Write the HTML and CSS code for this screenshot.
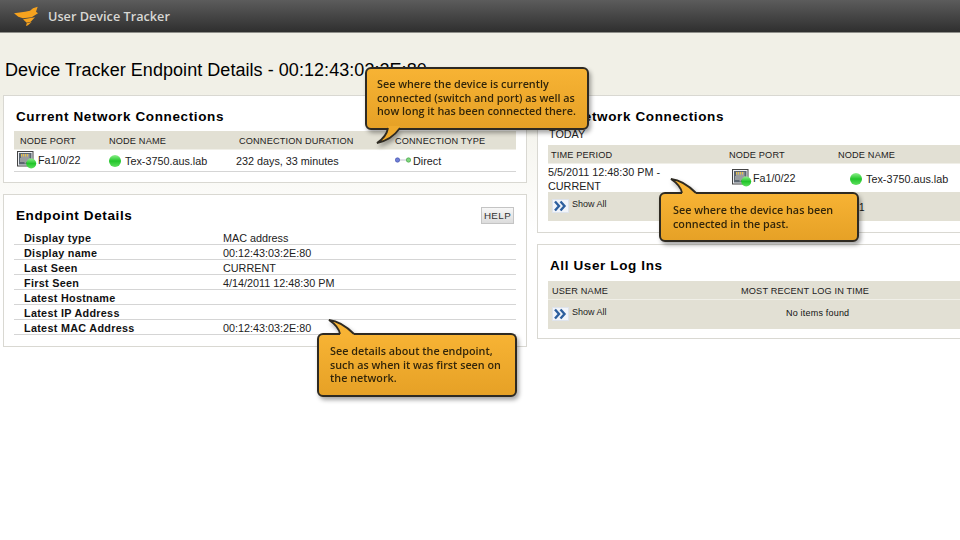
FILE: index.html
```html
<!DOCTYPE html>
<html lang="en">
<head>
<meta charset="utf-8">
<title>User Device Tracker</title>
<link rel="stylesheet" href="styles.css">
</head>
<body>
<svg class="defs" width="0" height="0" aria-hidden="true">
  <defs>
    <linearGradient id="led" x1="0" y1="0" x2="0" y2="1"><stop offset="0" stop-color="#8df08a"/><stop offset=".5" stop-color="#22c52a"/><stop offset="1" stop-color="#5fe05f"/></linearGradient>
    <symbol id="port" viewBox="0 0 20 20">
      <rect x=".5" y=".5" width="15.500" height="14.500" fill="#eef0f4" stroke="#444"/>
      <rect x="2" y="2" width="12.500" height="11.500" fill="#5c6670"/>
      <path d="M4 3h8.500v4h1v4H9v1.500H7.500V11H3V7h1z" fill="#9a9d9f"/>
      <path d="M4.500 3v2.500M6.500 3v2.500M8.500 3v2.500M10.500 3v2.500" stroke="#e8c04a"/>
      <circle cx="14.200" cy="12.500" r="5" fill="url(#led)"/>
    </symbol>
    <symbol id="showall" viewBox="0 0 17 14">
      <rect x=".5" y=".5" width="16" height="13" fill="#f2f5fa" stroke="#dfe4ec"/>
      <path d="M3 2.500 7 7 3 11.500M8.500 2.500l4 4.500-4 4.500" fill="none" stroke="#2d5f9e" stroke-width="2.400"/>
    </symbol>
  </defs>
</svg>

<header class="topbar">
  <svg class="logo" width="25" height="20" viewBox="14 6 25 20" aria-hidden="true">
    <path d="M14 13.300 25 11.700 30 10.700 33 8.300 37.700 6.700 36 11.700 38 13.300 31.700 17.300 23 18.300 18.300 16.700z" fill="#f6a21e"/>
    <path d="M23 19.300 35 17.300 30.700 21.700 26.700 22.700z" fill="#f6a21e"/>
    <path d="M26.700 23.300 31.700 22 28 25.300 26 26z" fill="#f6a21e"/>
  </svg>
  <span class="brand">User Device Tracker</span>
</header>

<main class="page">
  <h1 class="page-title">Device Tracker Endpoint Details - 00:12:43:03:2E:80</h1>
  <div class="columns">
    <div class="col col-left">
      <section class="panel panel-current">
        <h2 class="panel-title">Current Network Connections</h2>
        <div class="row head cur"><span>NODE PORT</span><span>NODE NAME</span><span>CONNECTION DURATION</span><span>CONNECTION TYPE</span></div>
        <div class="row body cur">
          <span class="cell cell-port"><svg class="ico-port"><use href="#port"/></svg>Fa1/0/22</span>
          <span class="cell"><svg class="ico-led" viewBox="0 0 12 12"><circle cx="6" cy="6" r="6" fill="url(#led)"/></svg>Tex-3750.aus.lab</span>
          <span class="cell">232 days, 33 minutes</span>
          <span class="cell"><svg class="ico-conn" viewBox="0 0 16 6"><path d="M3 3h10" stroke="#aab" stroke-width=".7"/><circle cx="2.500" cy="3" r="2.200" fill="#6f7fd6" stroke="#3a4aa8" stroke-width=".6"/><circle cx="13.500" cy="3" r="2.200" fill="#7ed67e" stroke="#3a9a3a" stroke-width=".6"/></svg>Direct</span>
        </div>
      </section>

      <section class="panel panel-details">
        <div class="panel-head">
          <h2 class="panel-title">Endpoint Details</h2>
          <button class="help">HELP</button>
        </div>
        <dl class="details">
          <div class="detail"><dt>Display type</dt><dd>MAC address</dd></div>
          <div class="detail"><dt>Display name</dt><dd>00:12:43:03:2E:80</dd></div>
          <div class="detail"><dt>Last Seen</dt><dd>CURRENT</dd></div>
          <div class="detail"><dt>First Seen</dt><dd>4/14/2011 12:48:30 PM</dd></div>
          <div class="detail"><dt>Latest Hostname</dt><dd></dd></div>
          <div class="detail"><dt>Latest IP Address</dt><dd></dd></div>
          <div class="detail"><dt>Latest MAC Address</dt><dd>00:12:43:03:2E:80</dd></div>
        </dl>
      </section>
    </div>

    <div class="col col-right">
      <section class="panel panel-all">
        <h2 class="panel-title">All Network Connections</h2>
        <div class="today">TODAY</div>
        <div class="row head all"><span>TIME PERIOD</span><span>NODE PORT</span><span>NODE NAME</span></div>
        <div class="row body all">
          <span class="cell period">5/5/2011 12:48:30 PM - CURRENT</span>
          <span class="cell cell-port"><svg class="ico-port"><use href="#port"/></svg>Fa1/0/22</span>
          <span class="cell name-indent"><svg class="ico-led" viewBox="0 0 12 12"><circle cx="6" cy="6" r="6" fill="url(#led)"/></svg>Tex-3750.aus.lab</span>
        </div>
        <div class="footer-row">
          <a class="show-all"><svg class="ico-show"><use href="#showall"/></svg><span class="show-label">Show All</span></a>
          <span class="pager">1</span>
        </div>
      </section>

      <section class="panel panel-logins">
        <h2 class="panel-title">All User Log Ins</h2>
        <div class="row head log"><span>USER NAME</span><span>MOST RECENT LOG IN TIME</span></div>
        <div class="footer-row footer-log">
          <a class="show-all"><svg class="ico-show"><use href="#showall"/></svg><span class="show-label">Show All</span></a>
          <span class="none">No items found</span>
        </div>
      </section>
    </div>
  </div>
</main>

<aside class="callout c1">
  <svg class="tail tail-down" width="28" height="16" viewBox="0 0 28 16"><path class="tail-fill" d="M13 -2V0C12 6 8 11 2 15 12 13 20 7 25 0V-2z"/><path class="tail-line" d="M13 0C12 6 8 11 2 15 12 13 20 7 25 0"/></svg>
  See where the device is currently connected (switch and port) as well as how long it has been connected there.
</aside>
<aside class="callout c2">
  <svg class="tail tail-up" width="28" height="15" viewBox="0 0 28 15"><path class="tail-fill" d="M1 0C10 1 18 6 26 14V16H12V14C11 8 7 4 1 0z"/><path class="tail-line" d="M12 14C11 8 7 4 1 0 10 1 18 6 26 14"/></svg>
  See where the device has been connected in the past.
</aside>
<aside class="callout c3">
  <svg class="tail tail-up" width="28" height="15" viewBox="0 0 28 15"><path class="tail-fill" d="M1 0C10 1 18 6 26 14V16H12V14C11 8 7 4 1 0z"/><path class="tail-line" d="M12 14C11 8 7 4 1 0 10 1 18 6 26 14"/></svg>
  See details about the endpoint, such as when it was first seen on the network.
</aside>
</body>
</html>
```
FILE: styles.css
```css
* { box-sizing: border-box; }
html, body { margin: 0; height: 100%; }
body {
  position: relative;
  width: 960px;
  height: 540px;
  overflow: hidden;
  background: #fff;
  font-family: "Liberation Sans", Arial, sans-serif;
  color: #111;
}
.defs { position: absolute; }

.topbar {
  height: 33px;
  display: flex;
  align-items: center;
  padding-left: 14px;
  background: linear-gradient(#5c5c5c, #2f2f2f);
  border-bottom: 1px solid #8f8f8a;
}
.logo { margin-right: 9px; }
.brand {
  font: 600 12.700px "Open Sans", sans-serif;
  color: #d8d8d4;
}

.page {
  background: linear-gradient(#f1f0e7 0, #f1f0e7 60px, #fff 200px);
  height: 507px;
  padding: 27px 0 0 3px;
}
.page-title {
  margin: 0 0 14px 2px;
  font-size: 18px;
  line-height: 21px;
  font-weight: 400;
  letter-spacing: .05px;
  color: #000;
  white-space: nowrap;
}
.columns { display: flex; gap: 10px; }
.col { flex: none; display: flex; flex-direction: column; gap: 11px; }
.col-left { width: 524px; }
.col-right { width: 440px; }

.panel {
  background: #fff;
  border: 1px solid #d9d8d2;
  padding: 0 10px;
}
.panel-current { height: 88px; }
.panel-details { height: 153px; }
.panel-all { height: 138px; }
.panel-logins { height: 95px; }
.panel-title {
  margin: 0;
  padding: 12px 0 0 2px;
  height: 35px;
  font-size: 13.500px;
  line-height: 17px;
  font-weight: 700;
  letter-spacing: .62px;
  color: #000;
}
.panel-head { display: flex; justify-content: space-between; align-items: flex-start; height: 35px; }
.help {
  margin-top: 12px;
  margin-right: 2px;
  width: 33px;
  height: 17px;
  padding: 0;
  border: 1px solid #c4c4c4;
  background: linear-gradient(#f7f7f7, #dcdcdc);
  font: 9.800px "Liberation Sans", sans-serif;
  letter-spacing: .4px;
  color: #333;
}

.row { display: flex; align-items: center; }
.head {
  height: 19px;
  padding-top: 1px;
  background: #e2e0d4;
  border-bottom: 1px solid #f0efe8;
  font-size: 9.200px;
  letter-spacing: .15px;
  color: #222;
}
.body {
  font-size: 10.800px;
  color: #222;
  border-bottom: 1px solid #d5d5d5;
}
.row > span { flex: none; display: flex; align-items: center; }
.cur.head { padding-left: 6px; }
.cur.head > span:nth-child(1) { width: 89px; }
.cur.head > span:nth-child(2) { width: 130px; }
.cur.head > span:nth-child(3) { width: 156px; }
.cur.body { height: 22px; padding-left: 3px; }
.cur.body > span:nth-child(1) { width: 92px; }
.cur.body > span:nth-child(2) { width: 127px; }
.cur.body > span:nth-child(3) { width: 159px; }

.cell-port { margin-bottom: 2px; }
.ico-port { width: 20px; height: 20px; margin: 2px 1px 0 0; flex: none; }
.ico-led { width: 12px; height: 12px; margin-right: 4px; flex: none; }
.ico-conn { width: 16px; height: 6px; margin: 0 2px 2px 0; flex: none; }

.details { margin: 0; }
.detail {
  display: flex;
  height: 15px;
  padding: 2px 0 0 10px;
  border-bottom: 1px solid #d5d5d5;
  font-size: 10.800px;
  line-height: 12px;
}
.detail dt { width: 199px; font-weight: 700; letter-spacing: .3px; color: #111; }
.detail dd { margin: 0; color: #222; }

.panel-all { padding-right: 0; }
.panel-logins { padding-right: 0; }
.panel-all .panel-title { height: 30px; padding-left: 2px; }
.today { font-size: 10.800px; height: 19px; line-height: 13px; padding: 2px 0 0 1px; color: #222; }
.all.head { padding-left: 3px; }
.all.head > span:nth-child(1) { width: 178px; }
.all.head > span:nth-child(2) { width: 109px; }
.all.body { height: 28px; padding-top: 2px; border-bottom: 0; }
.row > .period { display: block; width: 130px; margin-right: 54px; line-height: 14px; }
.all.body > span:nth-child(2) { width: 118px; }
.footer-row {
  position: relative;
  display: flex;
  align-items: flex-start;
  height: 29px;
  background: #e2e0d4;
  padding: 7px 0 0 4px;
}
.show-all { display: flex; align-items: flex-start; font-size: 9px; line-height: 11px; color: #222; }
.ico-show { width: 17px; height: 14px; margin-right: 3px; }
.pager { position: absolute; left: 311px; top: 10px; font-size: 10px; }
.panel-logins .panel-title { height: 36px; padding-left: 2px; }
.log.head { height: 19px; padding-left: 4px; }
.log.head > span:nth-child(1) { width: 189px; }
.none { position: absolute; left: 238px; top: 8px; font-size: 9px; letter-spacing: .2px; }

.callout {
  position: absolute;
  font: 600 10.800px/13.500px "Open Sans", sans-serif;
  color: #33260a;
  background: linear-gradient(#f7b334, #e6a126);
  border: 2px solid #2e2a22;
  border-radius: 6px;
  filter: drop-shadow(2px 3px 2px rgba(0, 0, 0, .35));
}
.tail { position: absolute; overflow: visible; }
.tail-fill { fill: #efaa2d; }
.c2 .tail-fill, .c3 .tail-fill { fill: #f7b334; }
.tail-line { fill: none; stroke: #2e2a22; stroke-width: 1.800; }
.tail-down { left: 8px; top: 100%; }
.tail-up { left: 9px; bottom: 100%; }
.c1 { left: 365px; top: 67px; width: 224px; height: 63px; padding: 8px 10px 0 10px; }
.c2 { left: 659px; top: 192px; width: 200px; height: 50px; padding: 9px 10px 0 12px; }
.c3 { left: 317px; top: 333px; width: 200px; height: 64px; padding: 9px 10px 0 11px; }
```
